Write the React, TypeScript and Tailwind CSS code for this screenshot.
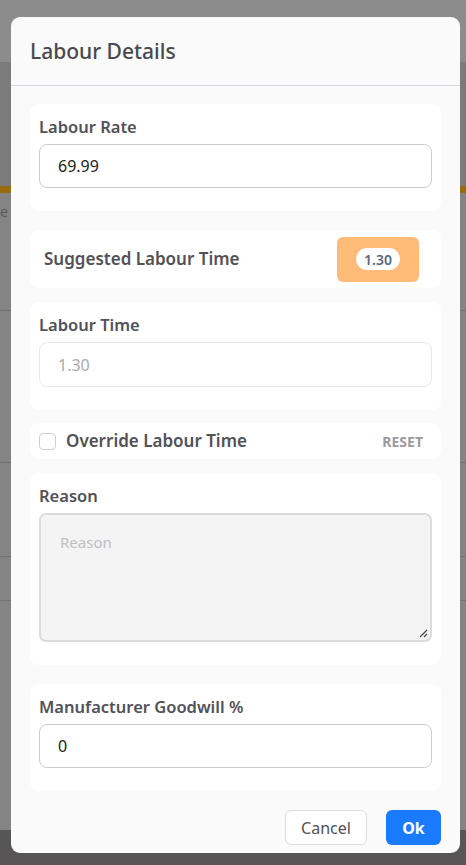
import React from 'react';

const font = { fontFamily: '"Noto Sans", "Open Sans", sans-serif' };

const Backdrop = () => (
  <div className="flex flex-col h-[865px] w-full">
    <div className="h-[62px] bg-[#8c8c8c]" />
    <div className="h-[124px] bg-[#7b7b7b]" />
    <div className="h-[7px] bg-[#9a6a10]" />
    <div className="flex-1 bg-[#848484] flex flex-col">
      <div className="h-[40px] text-[#5a5a5a] text-[14px] pt-[8px]">e</div>
      <div className="h-[78px] border-b border-[#727272]" />
      <div className="h-[152px] border-b border-[#727272]" />
      <div className="h-[94px] border-b border-[#727272]" />
      <div className="h-[44px] border-b border-[#727272]" />
    </div>
    <div className="h-[35px] bg-[#575555]" />
  </div>
);

const Card = ({ className = '', children }: { className?: string; children: React.ReactNode }) => (
  <div className={`bg-white rounded-[9px] ${className}`}>{children}</div>
);

const Label = ({ children }: { children: React.ReactNode }) => (
  <div className="text-[16.5px] leading-[22px] font-semibold text-[#515158] mb-[6px]">{children}</div>
);

const App = () => {
  return (
    <div className="relative w-[466px] h-[865px] overflow-hidden" style={font}>
      <Backdrop />

      {/* Modal */}
      <div className="absolute left-[11px] top-[17px] w-[449px] bg-[#fafafa] rounded-[9px] flex flex-col">
        <div className="h-[69px] flex items-center px-[19px] border-b border-[#d6d6de]">
          <h2 className="text-[21px] font-medium text-[#49494f] leading-none">Labour Details</h2>
        </div>

        <div className="px-[19px] pt-[18px] pb-[8px] flex flex-col">
          <Card className="px-[9px] pt-[12px] pb-[23px]">
            <Label>Labour Rate</Label>
            <div className="h-[44px] rounded-[8px] border border-[#cccccc] flex items-center px-[18px] text-[16px] text-[#222]">
              69.99
            </div>
          </Card>

          <Card className="mt-[19px] h-[58px] pl-[14px] pr-[22px] flex items-center justify-between">
            <span className="text-[17px] font-semibold text-[#515158]">Suggested Labour Time</span>
            <div className="w-[82px] h-[45px] rounded-[6px] bg-[#ffbb77] flex items-center justify-center">
              <span className="bg-white rounded-full px-[8px] h-[22px] flex items-center text-[14px] font-semibold text-[#5c6880]">
                1.30
              </span>
            </div>
          </Card>

          <Card className="mt-[14px] px-[9px] pt-[12px] pb-[23px]">
            <Label>Labour Time</Label>
            <div className="h-[45px] rounded-[8px] border border-[#e8e8e8] flex items-center px-[18px] text-[16px] text-[#aaaaaa]">
              1.30
            </div>
          </Card>

          <Card className="mt-[13px] h-[36px] pl-[9px] pr-[18px] flex items-center">
            <span className="w-[17px] h-[17px] rounded-[4px] border border-[#cfcfcf] bg-white" />
            <span className="ml-[10px] text-[17px] font-semibold text-[#515158]">Override Labour Time</span>
            <span className="ml-auto text-[14px] font-bold text-[#9a9aa0]">RESET</span>
          </Card>

          <Card className="mt-[14px] px-[9px] pt-[12px] pb-[23px]">
            <Label>Reason</Label>
            <div className="relative h-[129px] rounded-[7px] border-2 border-[#dcdcdc] bg-[#f4f4f4] px-[19px] pt-[16px] text-[15px] text-[#c0c0c0]">
              Reason
              <svg className="absolute right-[2px] bottom-[2px]" width="10" height="10" viewBox="0 0 10 10">
                <path d="M9 2 L2 9 M9 6 L6 9" stroke="#444" strokeWidth="1.2" />
              </svg>
            </div>
          </Card>

          <Card className="mt-[19px] px-[9px] pt-[12px] pb-[23px]">
            <Label>Manufacturer Goodwill %</Label>
            <div className="h-[44px] rounded-[8px] border border-[#cccccc] flex items-center px-[18px] text-[16px] text-[#222]">
              0
            </div>
          </Card>

          <div className="mt-[19px] flex justify-end gap-[19px]">
            <button className="w-[82px] h-[35px] rounded-[6px] border border-[#dddddd] bg-white text-[16px] text-[#515158]">
              Cancel
            </button>
            <button className="w-[55px] h-[35px] rounded-[6px] bg-[#1a7bff] text-[16px] font-bold text-white">
              Ok
            </button>
          </div>
        </div>
      </div>
    </div>
  );
};

export default App;
